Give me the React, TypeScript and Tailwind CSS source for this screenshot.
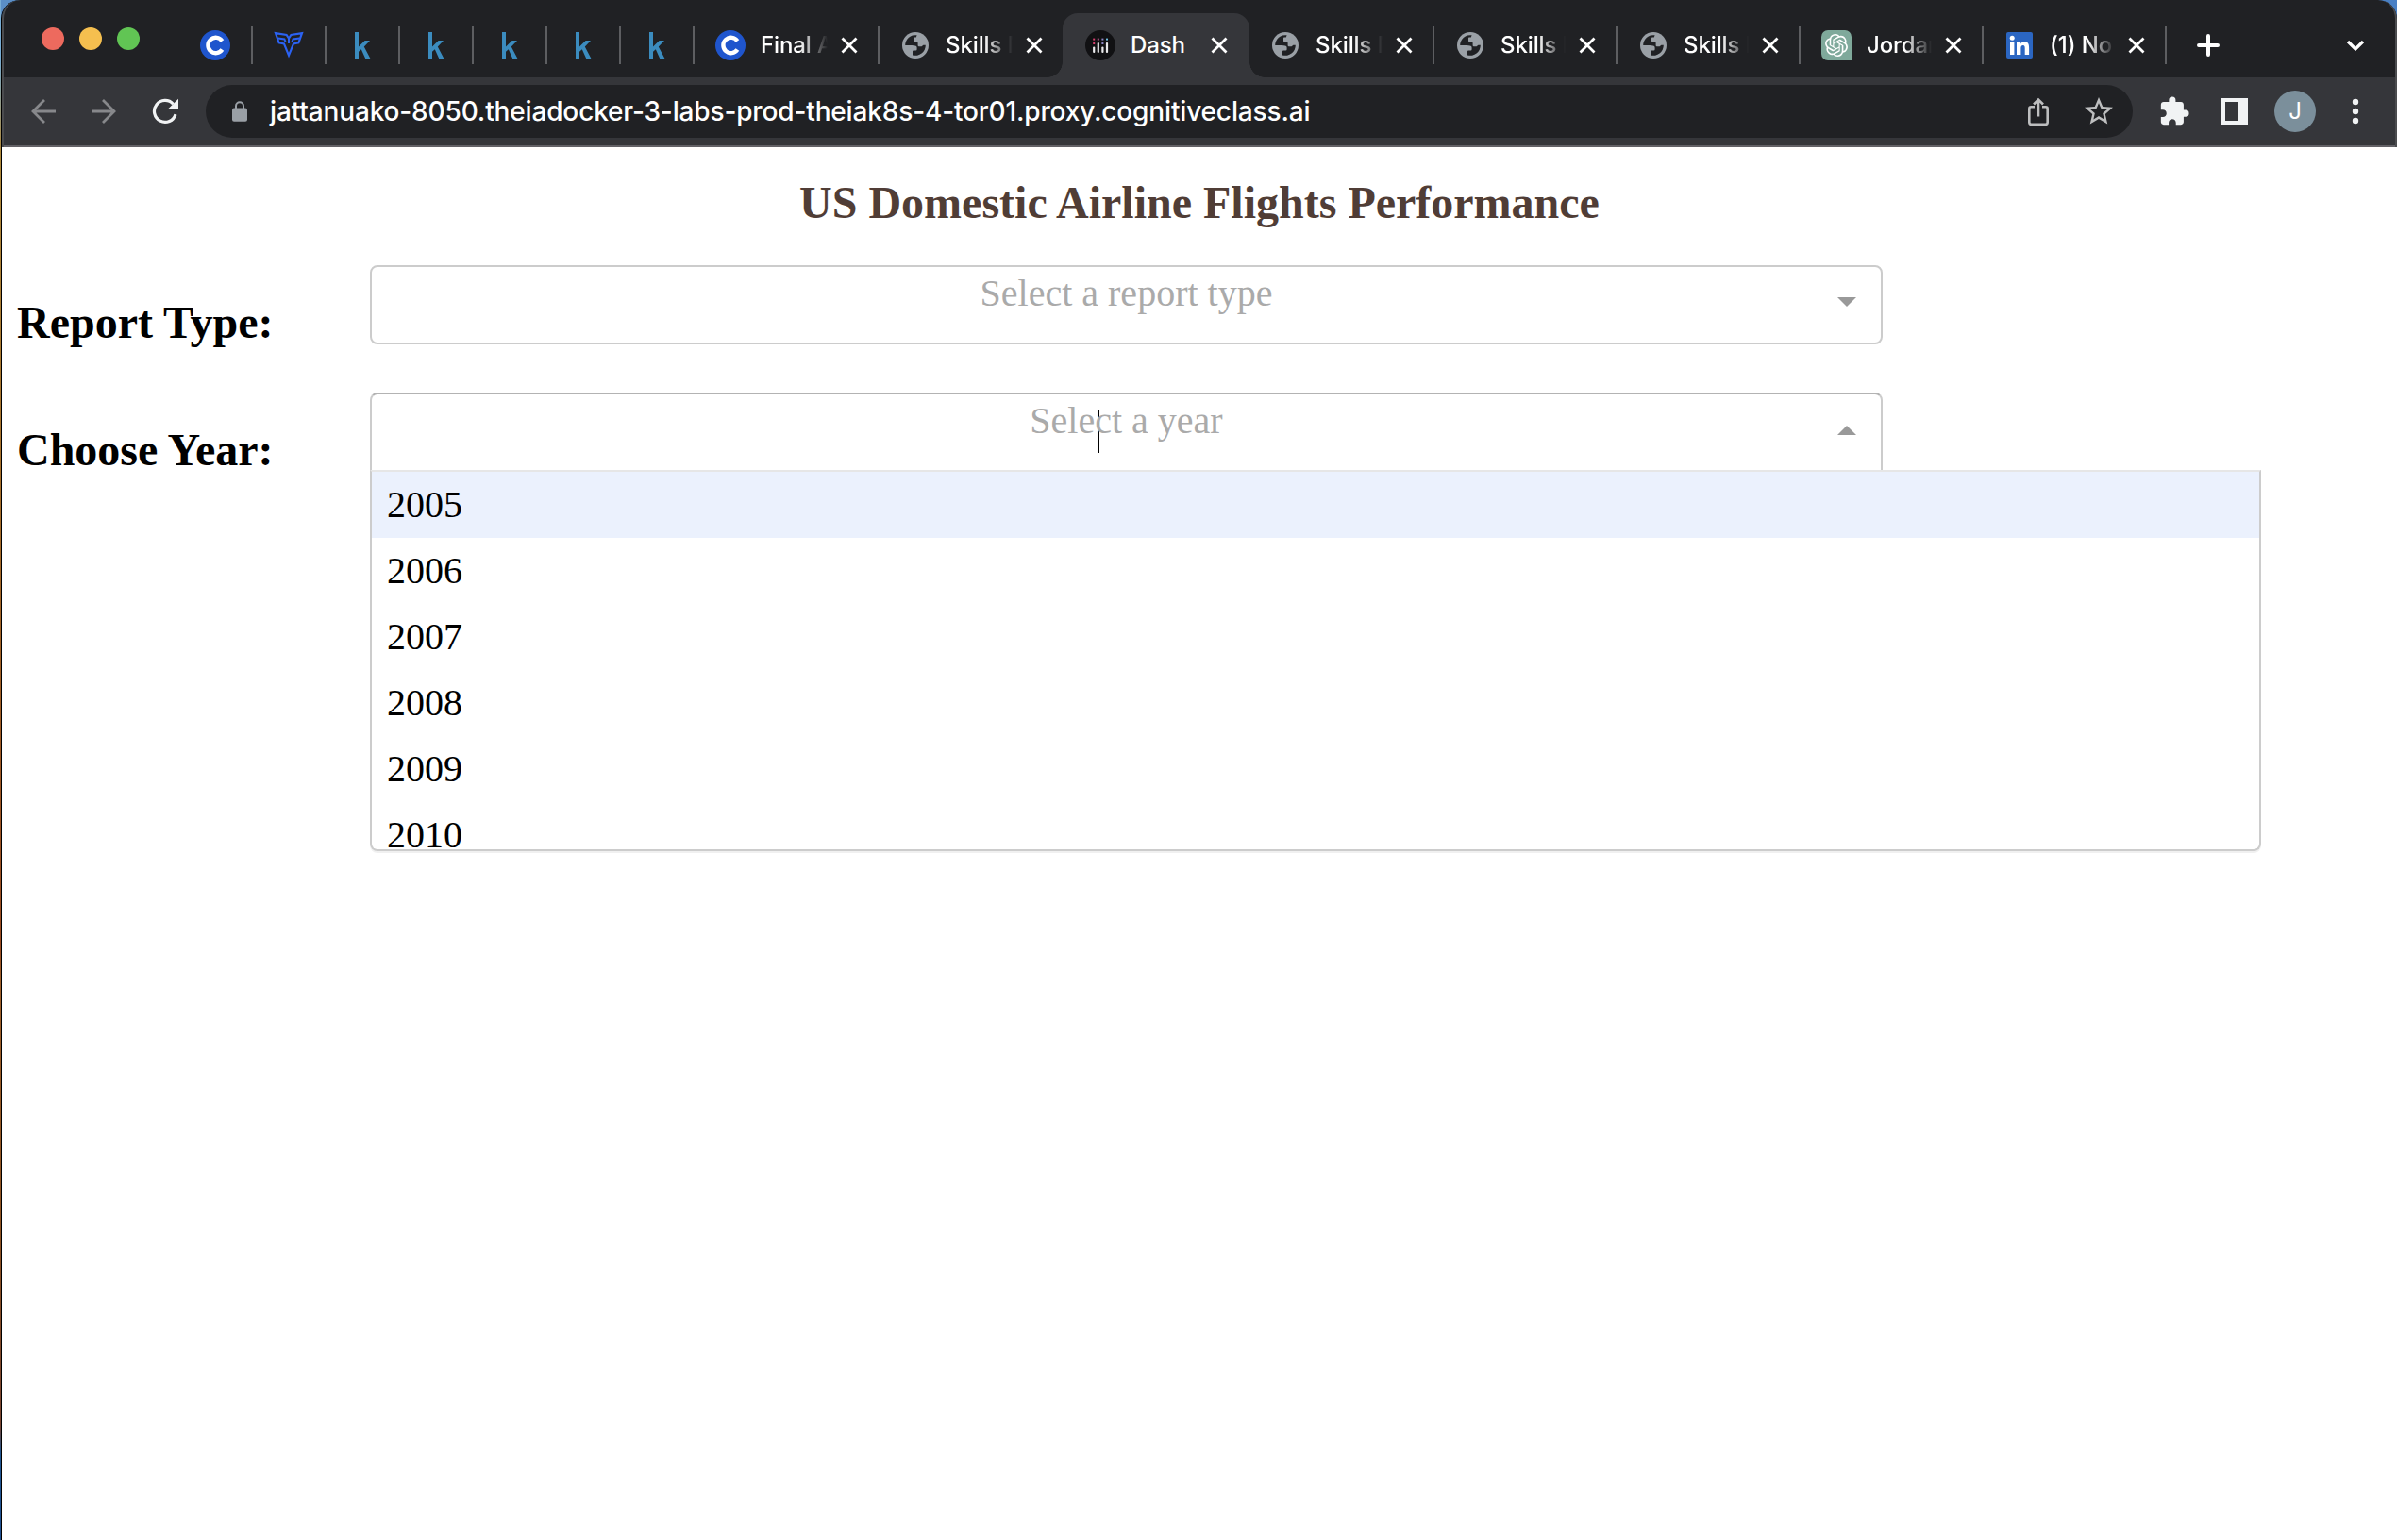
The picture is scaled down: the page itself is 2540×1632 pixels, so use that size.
import React from "react";
import { SiOpenai } from "react-icons/si";
import { MdExtension, MdStarBorder } from "react-icons/md";

function Coursera() {
  return (
    <svg className="h-8 w-8" viewBox="0 0 32 32">
      <circle cx="16" cy="16" r="16" fill="#1f55cd" />
      <path d="M23.4 11.4A8.2 8.2 0 1 0 23.4 20.6" fill="none" stroke="#fff" strokeWidth="4.4" />
    </svg>
  );
}

function Wings() {
  return (
    <svg className="h-8 w-8" viewBox="0 0 32 32" fill="none" stroke="#2b62f2" strokeWidth="2.2">
      <path d="M2 3.2L13.6 5L16 8.6L18.4 5L30 3.2L26.4 13.4L21 14.4L16 26.6L11 14.4L5.6 13.4Z" />
      <path d="M4.6 8.6L11.4 9.4L12.6 12.6M27.4 8.6L20.6 9.4L19.4 12.6M16 8V14" strokeWidth="2" />
    </svg>
  );
}

function Kaggle() {
  return (
    <svg className="h-8 w-8" viewBox="0 0 32 32" fill="#3b8cbf">
      <path d="M8 2H12V30H8Z" />
      <path d="M24 11H18.6L12 17.6V22.8L14.8 20.2L19.2 30H24.4L17.8 17.4Z" />
    </svg>
  );
}

function Globe() {
  return (
    <svg className="h-8 w-8" viewBox="-2 -2 32 32">
      <circle cx="14" cy="14" r="14" fill="#9aa0a6" />
      <path
        d="M3.2 14A10.8 10.8 0 0 1 15.6 3.3L14.8 5.4H12.8Q12 5.4 12 6.4V9.2Q12 10.4 13.2 10.4H15.4Q16.6 10.4 16.6 11.6V14Q16.6 15.2 17.8 15.2H20.6L22.4 13.8H24.8A10.8 10.8 0 0 1 11 24.4V20.4Q11 19.4 12 19.4H14.4Q15.6 19.4 15.6 18.2V16.4Q15.6 14.6 13.8 14.4L10.4 14Z"
        fill="#202124"
      />
    </svg>
  );
}

function DashLogo() {
  return (
    <svg className="h-8 w-8" viewBox="0 0 32 32">
      <circle cx="16" cy="16" r="16" fill="#111113" />
      <rect x="8.2" y="8.6" width="2" height="2" fill="#d8406f" />
      <rect x="12.8" y="8.6" width="2" height="2" fill="#b3588f" />
      <rect x="17.4" y="8.6" width="2" height="2" fill="#8c86c4" />
      <rect x="22" y="8.6" width="2" height="2" fill="#6fc0e0" />
      <rect x="8.2" y="13" width="2" height="2" fill="#d8406f" />
      <rect x="17.4" y="13" width="2" height="2" fill="#8c86c4" />
      <g fill="#e8e8ea">
        <rect x="8.1" y="17.6" width="2.2" height="6.4" rx="1" />
        <rect x="12.7" y="13" width="2.2" height="11" rx="1" />
        <rect x="17.3" y="17.6" width="2.2" height="6.4" rx="1" />
        <rect x="21.9" y="13" width="2.2" height="11" rx="1" />
      </g>
    </svg>
  );
}

function ChatGPT() {
  return (
    <div className="flex h-8 w-8 items-center justify-center rounded-t-[7px] rounded-bl-[7px] bg-[#7fa99b]">
      <SiOpenai className="h-6 w-6 text-white" />
    </div>
  );
}

function LinkedIn() {
  return (
    <svg className="h-8 w-8" viewBox="0 0 32 32">
      <rect x="2" y="2" width="28" height="28" rx="2" fill="#2b66c2" />
      <circle cx="8.2" cy="8.2" r="2.5" fill="#fff" />
      <path d="M6 12.6h4.4V26H6zM13 12.6h4.2v1.8c.8-1.3 2.2-2.2 4.1-2.2 4 0 4.8 2.7 4.8 6.2V26h-4.4v-6.7c0-1.7-.2-3.2-2-3.2s-2.3 1.4-2.3 3.1V26H13z" fill="#fff" />
    </svg>
  );
}

function CloseX() {
  return (
    <svg className="h-[18px] w-[18px] shrink-0" viewBox="0 0 18 18" fill="none" stroke="#fff" strokeWidth="2.8">
      <path d="M1.5 1.5L16.5 16.5M16.5 1.5L1.5 16.5" />
    </svg>
  );
}

function Separator() {
  return <div className="h-10 w-0.5 shrink-0 bg-[#5d5e61]" />;
}

function PinnedTab({ children }: { children: React.ReactNode }) {
  return (
    <div className="flex h-10 w-[78px] shrink-0 items-center justify-between pl-[22px]">
      {children}
      <Separator />
    </div>
  );
}

type TabProps = { icon: React.ReactNode; title: string; width?: string; titleWidth?: string; bar?: boolean };

function Tab({ icon, title, width = "w-[194px]", titleWidth = "w-[69px]", bar = true }: TabProps) {
  return (
    <div className={"flex h-10 shrink-0 items-center pl-[22px] " + width}>
      <div className="w-8 shrink-0">{icon}</div>
      <div
        className={
          "ml-4 shrink-0 overflow-hidden whitespace-nowrap [mask-image:linear-gradient(to_right,#000_58%,transparent_100%)] " +
          titleWidth
        }
      >
        {title}
      </div>
      <div className="ml-[14px] flex grow items-center justify-between">
        <CloseX />
        {bar && <Separator />}
      </div>
    </div>
  );
}

function ActiveTab() {
  return (
    <div className="relative flex h-[68px] w-[198px] shrink-0 items-center rounded-t-2xl bg-[#35363a] pl-6">
      <div className="absolute bottom-0 -left-4 h-4 w-4 bg-[radial-gradient(circle_at_0_0,transparent_15.5px,#35363a_16px)]" />
      <div className="absolute bottom-0 -right-4 h-4 w-4 bg-[radial-gradient(circle_at_100%_0,transparent_15.5px,#35363a_16px)]" />
      <DashLogo />
      <div className="ml-4 w-[71px]">Dash</div>
      <div className="ml-[14px]">
        <CloseX />
      </div>
    </div>
  );
}

function TabStrip() {
  return (
    <div className="flex h-[82px] items-end bg-[#202124] font-['Inter',sans-serif] text-[24px] leading-8 font-medium tracking-[-0.1px] text-white">
      <div className="flex h-[82px] w-[188px] shrink-0 items-center gap-4 pl-[42px]">
        <div className="h-6 w-6 rounded-full bg-[#ed6a5e]" />
        <div className="h-6 w-6 rounded-full bg-[#f5bf4f]" />
        <div className="h-6 w-6 rounded-full bg-[#61c554]" />
      </div>
      <div className="flex h-[68px] items-center">
        <PinnedTab><Coursera /></PinnedTab>
        <PinnedTab><Wings /></PinnedTab>
        {[0, 1, 2, 3, 4].map((i) => (
          <PinnedTab key={i}><Kaggle /></PinnedTab>
        ))}
        <Tab icon={<Coursera />} title="Final A" width="w-[196px]" titleWidth="w-[71px]" />
        <Tab icon={<Globe />} title="Skills N" titleWidth="w-[71px]" bar={false} />
        <ActiveTab />
        <Tab icon={<Globe />} title="Skills N" width="w-[196px]" titleWidth="w-[71px]" />
        <Tab icon={<Globe />} title="Skills N" />
        <Tab icon={<Globe />} title="Skills N" />
        <Tab icon={<ChatGPT />} title="Jordan" />
        <Tab icon={<LinkedIn />} title="(1) No" />
        <svg className="ml-8 h-6 w-6" viewBox="0 0 24 24" stroke="#fff" strokeWidth="4" strokeLinecap="round">
          <path d="M12 2V22M2 12H22" />
        </svg>
        <svg className="ml-[134px] h-5 w-5" viewBox="0 0 20 20" fill="none" stroke="#fff" strokeWidth="3.2">
          <path d="M2 6L10 14L18 6" />
        </svg>
      </div>
    </div>
  );
}

function Toolbar() {
  return (
    <div className="flex h-[74px] items-center border-b-2 border-[#626166] bg-[#35363a] font-['Inter',sans-serif]">
      <svg className="ml-[30px] h-7 w-7 shrink-0" viewBox="0 0 28 28" fill="none" stroke="#87888b" strokeWidth="2.8">
        <path d="M27 14H3.5M15 2L3 14L15 26" />
      </svg>
      <svg className="ml-9 h-7 w-7 shrink-0" viewBox="0 0 28 28" fill="none" stroke="#87888b" strokeWidth="2.8">
        <path d="M1 14H24.5M13 2L25 14L13 26" />
      </svg>
      <svg className="ml-[37px] h-7 w-7 shrink-0" viewBox="0 0 28 28" fill="none" stroke="#f1f3f4" strokeWidth="3.2">
        <path d="M22.5 6.2A11.5 11.5 0 1 0 25 17.2" />
        <path d="M28 0.8V11.6H17Z" fill="#f1f3f4" stroke="none" />
      </svg>
      <div className="ml-[29px] flex h-14 w-[2042px] shrink-0 items-center rounded-full bg-[#202124]">
        <svg className="ml-7 h-[22px] w-4" viewBox="0 0 16 22">
          <rect y="7.4" width="16" height="14.4" rx="2" fill="#9aa0a6" />
          <path d="M4 8V5.2A4 4 0 0 1 12 5.2V8" fill="none" stroke="#9aa0a6" strokeWidth="2" />
        </svg>
        <div className="ml-[24px] grow text-[28px] leading-8 font-medium tracking-[-0.15px] whitespace-nowrap text-white">
          jattanuako-8050.theiadocker-3-labs-prod-theiak8s-4-tor01.proxy.cognitiveclass.ai
        </div>
        <svg className="h-8 w-8" viewBox="0 0 32 32" fill="none" stroke="#bdbebf" strokeWidth="2.6">
          <path d="M12 11.3H8.2Q6.3 11.3 6.3 13.2V27.4Q6.3 29.7 8.6 29.7H23.4Q25.7 29.7 25.7 27.4V13.2Q25.7 11.3 23.8 11.3H20M16 21.5V4M11 8.5L16 3.5L21 8.5" />
        </svg>
        <MdStarBorder className="mr-[18px] ml-[30px] h-9 w-9 text-[#bdbebf]" />
      </div>
      <MdExtension className="ml-[27px] h-[34px] w-[34px] text-[#f1f3f4]" />
      <svg className="ml-[33px] h-7 w-7" viewBox="0 0 28 28">
        <path d="M0 0H28V28H0ZM4 4V24H18V4Z" fill="#f1f3f4" fillRule="evenodd" />
      </svg>
      <div className="ml-7 flex h-11 w-11 items-center justify-center rounded-full bg-[#7b8f9b] text-[24px] text-white">J</div>
      <svg className="ml-[38px] h-7 w-2" viewBox="0 0 8 28" fill="#f1f3f4">
        <circle cx="4" cy="4" r="3.2" />
        <circle cx="4" cy="14" r="3.2" />
        <circle cx="4" cy="24" r="3.2" />
      </svg>
    </div>
  );
}

const years = ["2005", "2006", "2007", "2008", "2009", "2010"];

function Page() {
  return (
    <div className="grow bg-white font-['Liberation_Serif',serif] text-black">
      <h1 className="pt-8 text-center text-[48px] leading-[54px] font-bold text-[#503d36]">
        US Domestic Airline Flights Performance
      </h1>
      <div className="mt-[39px] flex h-[135px] pl-4">
        <h2 className="mt-[34px] w-[374px] text-[48px] leading-[54px] font-bold">Report Type:</h2>
        <div className="relative h-[84px] w-[1603px] rounded-lg border-2 border-[#ccc] text-center text-[40px] leading-[56px] text-[#aaa]">
          Select a report type
          <div className="absolute top-8 right-[26px] h-2.5 w-5 bg-[#999] [clip-path:polygon(0_0,100%_0,50%_100%)]" />
        </div>
      </div>
      <div className="flex pl-4">
        <h2 className="mt-[34px] w-[374px] text-[48px] leading-[54px] font-bold">Choose Year:</h2>
        <div className="relative h-[82px] w-[1603px] rounded-t-lg border-2 border-b-0 border-[#ccc] border-t-[#b3b3b3] text-center text-[40px] leading-[56px] text-[#aaa]">
          <div className="absolute top-4 left-[769px] h-[46px] w-0.5 bg-black" />
          <span className="relative">Select a year</span>
          <div className="absolute top-[33px] right-[26px] h-2.5 w-5 bg-[#999] [clip-path:polygon(50%_0,100%_100%,0_100%)]" />
          <div className="absolute top-20 -left-0.5 h-[404px] w-[2004px] overflow-hidden rounded-b-lg border-2 border-[#ccc] border-t-[#e6e6e6] bg-white text-left text-black shadow-[0_2px_0_rgba(0,0,0,0.06)]">
            {years.map((y, i) => (
              <div key={y} className={"h-[70px] px-4 leading-[70px] " + (i === 0 ? "bg-[#ebf1fd]" : "")}>
                {y}
              </div>
            ))}
          </div>
        </div>
      </div>
    </div>
  );
}

export default function App() {
  return (
    <div className="flex h-[1632px] w-[2540px] overflow-hidden bg-[linear-gradient(to_right,#5b8fc7_50%,#4a80c4_50%)]">
      <div className="w-px shrink-0 bg-[linear-gradient(#78aed6_0,#78aed6_60px,#b08a3c_160px,#a8702a_500px,#9a4a20_1000px,#a0602a_1040px,#8f5220_1300px,#7a4430_1510px,#1f5590_1540px,#1f4f90_1632px)]" />
      <div className="flex grow flex-col overflow-hidden rounded-t-[20px] border-l border-black">
        <div className="relative">
          <TabStrip />
          <Toolbar />
          <div className="pointer-events-none absolute inset-0 rounded-t-[20px] border-x-2 border-[#4b4c4f]" />
        </div>
        <Page />
      </div>
    </div>
  );
}
